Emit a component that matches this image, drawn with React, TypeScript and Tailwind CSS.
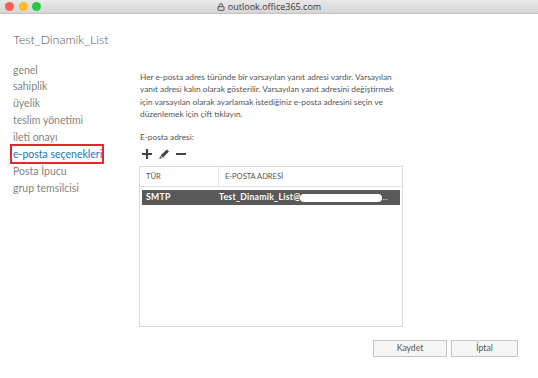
import { Lock } from "lucide-react";

const navItems = [
  "genel",
  "sahiplik",
  "üyelik",
  "teslim yönetimi",
  "ileti onayı",
  "e-posta seçenekleri",
  "Posta İpucu",
  "grup temsilcisi",
];

const lines = [
  "Her e-posta adres türünde bir varsayılan yanıt adresi vardır. Varsayılan",
  "yanıt adresi kalın olarak gösterilir. Varsayılan yanıt adresini değiştirmek",
  "için varsayılan olarak ayarlamak istediğiniz e-posta adresini seçin ve",
  "düzenlemek için çift tıklayın.",
];

const App = () => {
  return (
    <div
      className="w-[538px] h-[378px] bg-white flex flex-col overflow-hidden"
      style={{ fontFamily: 'Lato, "Open Sans", sans-serif' }}
    >
      {/* window title bar */}
      <div className="h-[14px] shrink-0 bg-gradient-to-b from-[#e8e8e8] to-[#d6d6d6] border-b border-[#c4c4c4] flex items-center px-[5px] relative">
        <div className="flex gap-[4.5px]">
          <span className="w-[9px] h-[9px] rounded-full bg-[#fc5f57]" />
          <span className="w-[9px] h-[9px] rounded-full bg-[#fdbc2e]" />
          <span className="w-[9px] h-[9px] rounded-full bg-[#28c840]" />
        </div>
        <div
          className="absolute inset-0 flex items-center justify-center gap-[3px] text-[9px] text-[#3a3a3a]"
          style={{ fontFamily: '"Open Sans", sans-serif' }}
        >
          <Lock size={8} strokeWidth={3} className="text-[#555]" />
          <span>outlook.office365.com</span>
        </div>
      </div>

      <div className="flex-1 flex flex-col px-[13px]">
        <h1 className="mt-[20px] text-[12.5px] font-light text-[#555] leading-none whitespace-nowrap">
          Test_Dinamik_List
        </h1>

        <div className="flex mt-[15px]">
          {/* left nav */}
          <ul className="w-[130px] shrink-0 flex flex-col text-[10.5px] text-[#858585] leading-[16.8px] -ml-[3px] whitespace-nowrap">
            {navItems.map((item) =>
              item === "e-posta seçenekleri" ? (
                <li
                  key={item}
                  className="border-2 border-[#e0282e] text-[#1e73be] px-[1px] w-[94px] leading-[16px] -my-[1px]"
                >
                  {item}
                </li>
              ) : (
                <li key={item} className="pl-[3px]">
                  {item}
                </li>
              )
            )}
          </ul>

          {/* main content */}
          <div className="flex-1 flex flex-col pt-[9px]">
            <p className="text-[8.3px] text-[#555] leading-[12.6px] whitespace-nowrap">
              {lines.map((l) => (
                <span key={l} className="block">
                  {l}
                </span>
              ))}
            </p>

            <div className="mt-[12px] text-[8.3px] text-[#555] leading-none">E-posta adresi:</div>

            <div className="flex items-center gap-[5px] mt-[7px] ml-[1px]">
              <svg width="12" height="12" viewBox="0 0 12 12">
                <path d="M6 1v10M1 6h10" stroke="#444" strokeWidth="2.2" />
              </svg>
              <svg width="12" height="12" viewBox="0 0 12 12">
                <path d="M2.6 7.6L8.8 1.4l2.2 2.2-6.2 6.2z" fill="#444" />
                <path d="M2.2 8.2l1.9 1.9-2.9 1z" fill="#444" />
              </svg>
              <svg width="12" height="12" viewBox="0 0 12 12">
                <path d="M1 6h10" stroke="#444" strokeWidth="2" />
              </svg>
            </div>

            {/* table */}
            <div className="mt-[6px] w-[264px] h-[161px] border border-[#d8dada] flex flex-col -ml-[1px]">
              <div className="flex h-[20px] border-b border-[#e3e5e5] text-[7.5px] text-[#555] shrink-0">
                <div className="w-[79px] border-r border-[#e3e5e5] flex items-center pl-[6px]">TÜR</div>
                <div className="flex-1 flex items-center pl-[6px]">E-POSTA ADRESİ</div>
              </div>
              <div className="mx-[2px] mt-[3px] h-[15px] bg-[#595959] flex items-center text-white text-[8.6px] font-bold tracking-[0.3px] whitespace-nowrap">
                <div className="w-[77px] pl-[4px]">SMTP</div>
                <div className="flex-1 flex items-center">
                  <span>Test_Dinamik_List@</span>
                  <span className="h-[8px] w-[82px] bg-white rounded-full -ml-[1px]" />
                  <span className="ml-[1px] text-[6px]">...</span>
                </div>
              </div>
            </div>

            {/* buttons */}
            <div className="flex justify-end gap-[4px] mt-[13px] mr-[7px]">
              <button className="w-[74px] h-[17px] border border-[#c6c6c6] bg-[#f6f6f6] text-[8.6px] text-[#555]">
                Kaydet
              </button>
              <button className="w-[67px] h-[17px] border border-[#c6c6c6] bg-[#f6f6f6] text-[8.6px] text-[#555]">
                İptal
              </button>
            </div>
          </div>
        </div>
      </div>
    </div>
  );
};

export default App;
